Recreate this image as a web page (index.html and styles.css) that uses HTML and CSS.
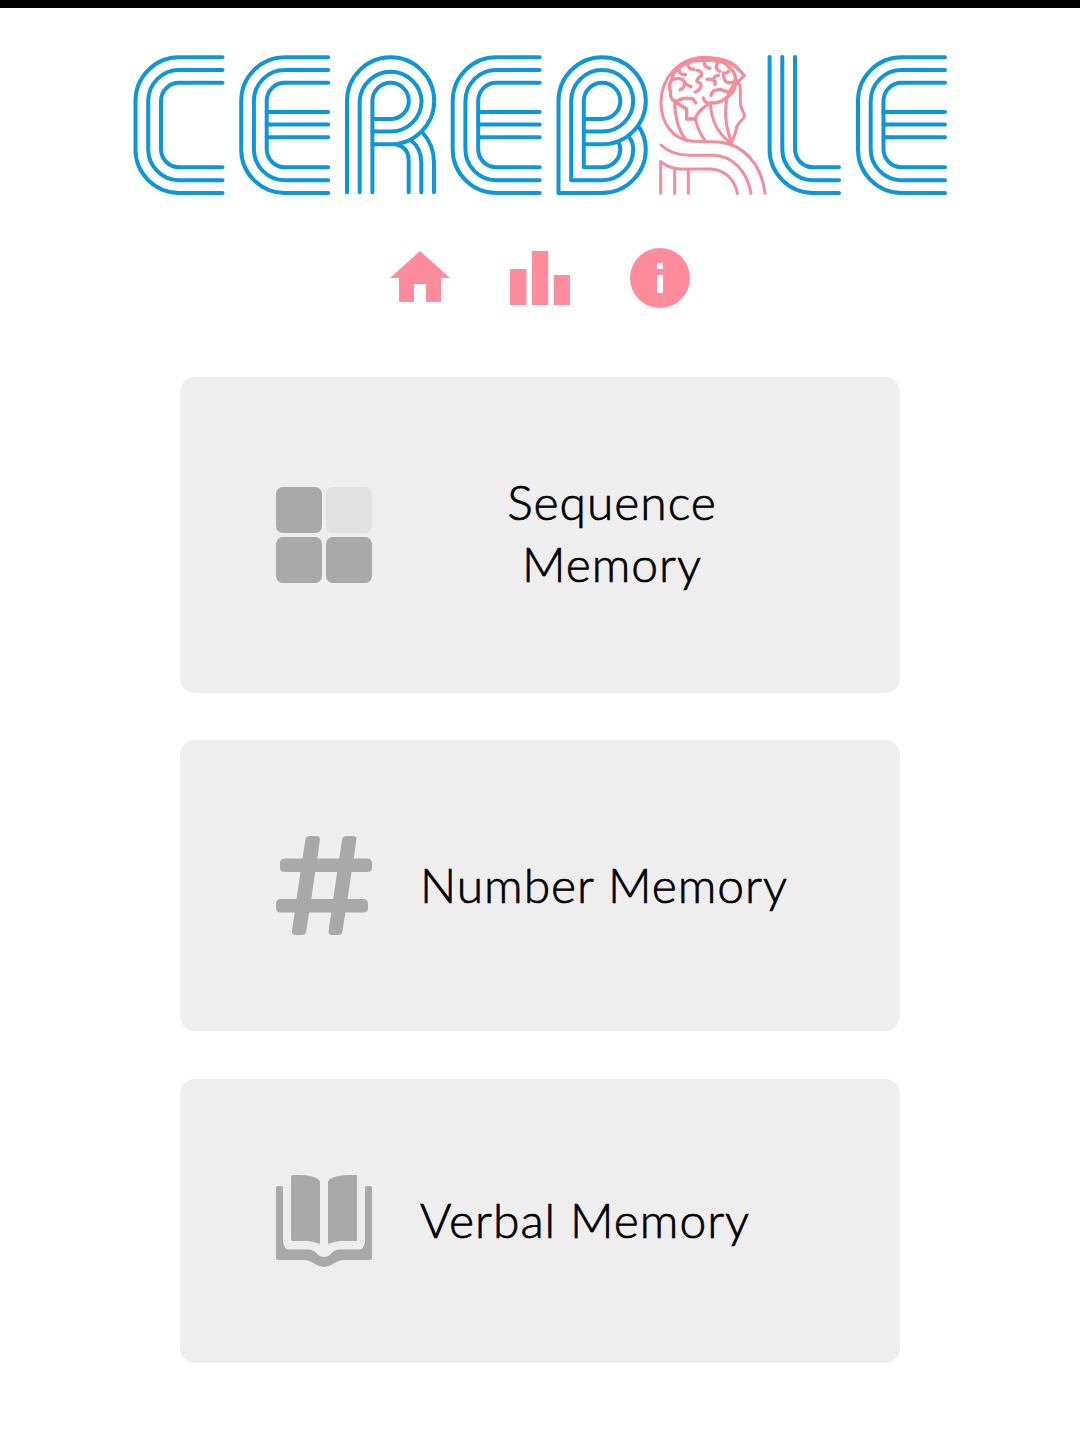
FILE: index.html
```html
<!DOCTYPE html>
<html lang="en">
<head>
<meta charset="utf-8">
<title>Cerebrle</title>
<link rel="stylesheet" href="styles.css">
</head>
<body>
<header class="header">
  <svg class="logo" viewBox="132 54 816 142" role="img" aria-label="Cerebrle">
    <defs>
      <g id="c">
        <path d="M222.5 57.3H179A43.5 43.7 0 0 0 135.5 101V149.3A43.5 43.7 0 0 0 179 193H222.5"/>
        <path d="M222.5 70H179A30.8 31 0 0 0 148.2 101V149.3A30.8 31 0 0 0 179 180.2H222.5"/>
        <path d="M222.5 82.8H179A18 18.2 0 0 0 161 101V149.3A18 18 0 0 0 179 167.2H222.5"/>
      </g>
      <g id="e">
        <use href="#c"/>
        <path d="M161 112H222.5M161 124.6H222.5M161 137.3H222.5"/>
      </g>
    </defs>
    <g class="line">
      <use href="#c"/>
      <use href="#e" x="105.7"/>
      <g>
        <path d="M347 192.3V101A43.6 43.7 0 0 1 434.2 101A43.6 43.5 0 0 1 390.6 144.3H372.5"/>
        <path d="M359.7 192.3V101A31 31 0 0 1 421.6 101A31 30.7 0 0 1 390.6 131.5H372.5"/>
        <path d="M372.4 192.3V101A18.2 18.2 0 0 1 408.8 101A18.2 18 0 0 1 390.6 119H372.5"/>
        <path d="M396 144.5Q408.7 147 408.7 161V192.3M411 140.5Q421.3 148 421.3 163V192.3M422.5 132.5Q434 145 434 163V192.3"/>
      </g>
      <use href="#e" x="317.2"/>
      <g>
        <path d="M637.8 125.5Q645.8 136 645.8 149.3A43.7 43.7 0 0 1 602.2 193H558.5V101A43.6 43.7 0 0 1 645.8 101A43.6 43.5 0 0 1 602.2 144.3H583.8"/>
        <path d="M629 137Q633.2 142 633.2 149.3A31 31 0 0 1 602.2 180.2H571.2V101A31 31 0 0 1 633.2 101A31 30.7 0 0 1 602.2 131.5H583.8"/>
        <path d="M618.5 142.5Q620.3 145 620.3 149.3A18 18 0 0 1 602.2 167.2H583.8V101A18.2 18.2 0 0 1 620.3 101A18.2 18 0 0 1 602.2 119H583.8"/>
      </g>
      <path d="M769.6 57V149.3A43.5 43.7 0 0 0 813 193H839M782.3 57V149.3A30.8 31 0 0 0 813 180.2H839M795 57V149.3A18 18 0 0 0 813 167.2H839"/>
      <use href="#e" x="722.5"/>
    </g>
    <g class="brain" transform="translate(650 45) scale(.33333)">
      <path d="M283 92C258 58 210 37 160 37C85 40 33 101 33 172C33 237 70 285 130 289L205 291C280 296 336 360 345 445"/>
      <path d="M198 40Q250 48 266 73L283 92L262 112Q271 118 271 132V166Q270 181 277 196Q286 212 281 219Q268 231 260 245Q257 270 245 291"/>
      <path d="M33 300Q65 330 118 331H190C250 333 292 380 303 445"/>
      <path d="M32 445V349Q55 370 90 372H182C226 374 255 406 262 445M74 374V445M115 374V445"/>
      <path d="M74 165Q74 245 110 287M181 174Q184 250 240 292M258 112C219 148 219 225 244 291M136 223Q148 267 167 289"/>
      <g class="folds">
        <path d="M110 192V222H134Q143 204 155 192Q164 185 180 174Q215 175 230 157Q253 145 255 122Q263 112 257 104Q256 80 238 67Q225 49 202 50Q182 43 162 47Q132 43 117 54Q94 57 87 72Q68 81 67 101Q53 122 62 140Q58 160 75 171L110 192"/>
        <path d="M67 104Q94 96 103 109Q105 118 123 125M103 109Q107 127 90 134M87 72Q87 91 107 89M113 55Q112 72 132 73M142 76Q158 80 154 92Q139 102 141 110Q159 116 151 128Q147 138 135 141M163 49Q161 67 180 70M205 51Q191 70 209 79M220 91Q223 115 240 113Q250 115 257 105M171 103Q183 101 190 105Q198 110 195 118M190 105Q191 92 206 91M220 84Q229 88 236 79M183 151Q187 132 212 134Q227 138 239 144M76 172Q94 158 115 160Q132 159 137 174M160 159Q163 174 180 174"/>
      </g>
    </g>
  </svg>
  <nav class="nav">
    <a class="nav-link" href="#" aria-label="Home"><svg viewBox="0 0 60 60"><path d="M30 3L60 30H51V54H36V36H24V54H9V30H0z"/></svg></a>
    <a class="nav-link" href="#" aria-label="Statistics"><svg viewBox="0 0 60 60"><path d="M0 21H16.5V57H0zM22 3H38.2V57H22zM43.7 27H60V57H43.7z"/></svg></a>
    <a class="nav-link" href="#" aria-label="Info"><svg viewBox="0 0 60 60"><path fill-rule="evenodd" d="M30 0A30 30 0 1 1 30 60A30 30 0 1 1 30 0zM27 15V21H33V15zM27 27V45H33V27z"/></svg></a>
  </nav>
</header>
<main class="games">
  <a class="card" href="#">
    <svg class="icon" viewBox="0 0 96 96" width="96" height="96"><rect width="46" height="46" rx="7"/><rect class="pale" x="50" width="46" height="46" rx="7"/><rect y="50" width="46" height="46" rx="7"/><rect x="50" y="50" width="46" height="46" rx="7"/></svg>
    <span class="label sequence">Sequence Memory</span>
  </a>
  <a class="card" href="#">
    <svg class="icon" viewBox="0 0 96 99" width="96" height="99"><path d="M34 0H40Q44.400 0 43.900 4L41.300 22.500H63.300L66 4Q66.500 0 70.500 0H77Q81 0 80.300 4L77.800 22.500H91Q96 22.500 96 27V31.500Q96 36 91 36H75.500L71.500 63H87Q92 63 92 68V72Q92 76.500 87 76.500H69.300L66.500 95Q66 99 62 99H56.500Q52 99 52.500 95L55.300 76.500H33L30.300 95Q29.500 99 25.500 99H20Q15.500 99 16 95L18.700 76.500H5Q0 76.500 0 72V68Q0 63 5 63H20.500L24.500 36H9Q4 36 4 31.500V27Q4 22.500 9 22.500H26.500L29.300 4Q29.800 0 34 0zM39.200 36L35.200 63H57.200L61.200 36z"/></svg>
    <span class="label single">Number Memory</span>
  </a>
  <a class="card" href="#">
    <svg class="icon" viewBox="0 0 96 92" width="96" height="92"><path d="M17 0H23Q37 0 43 5Q44 6 44 8V69Q36 66 30 66H17Q15 66 15 64V2Q15 0 17 0zM81 0H75Q59 0 53 5Q52 6 52 8V69Q60 66 66 66H81zM2 11H5Q7 11 7 13V67Q8 74.500 13 74.500H33Q39 75 42 80Q48 84 54 80Q57 75 63 74.500H83Q88 74.500 89 67V13Q89 11 91 11H94Q96 11 96 13V83Q96 85 94 85H68Q63 85 57 89Q48 95 39 89Q33 85 28 85H2Q0 85 0 83V13Q0 11 2 11z"/></svg>
    <span class="label single">Verbal Memory</span>
  </a>
</main>
</body>
</html>
```
FILE: styles.css
```css
* { box-sizing: border-box; }
body {
  margin: 0;
  min-height: 1433px;
  border-top: 8px solid #000;
  background: #fff;
  color: #000;
  font-family: Lato, "Liberation Sans", sans-serif;
}
.header {
  display: flex;
  flex-direction: column;
  align-items: center;
  padding-top: 46px;
}
.logo { display: block; width: 816px; height: 142px; }
.line, .brain { fill: none; stroke-linecap: round; stroke-linejoin: round; }
.line { stroke: #0e97d8; stroke-width: 4; }
.brain { stroke: #f48c9d; stroke-width: 9; }
.folds { stroke-width: 10; }
.nav { display: flex; gap: 60px; margin-top: 52px; }
.nav-link, .nav-link svg { display: block; width: 60px; height: 60px; }
.nav-link svg { fill: #fe8c9d; }
.games {
  display: flex;
  flex-direction: column;
  gap: 47.5px;
  width: 720px;
  margin: 68.9px auto 0;
}
.card {
  display: flex;
  align-items: center;
  gap: 48px;
  padding: 96px;
  border-radius: 15px;
  background: #eee;
  color: inherit;
  text-decoration: none;
}
.icon { flex: none; fill: #a9a9a9; }
.pale { fill: #e1e1e1; }
.label {
  font-size: 48px;
  font-weight: 300;
  line-height: 62px;
  letter-spacing: .95px;
  -webkit-text-stroke: .7px #000;
}
.sequence { flex: 1; margin: -2px 0 0; text-align: center; }
.sequence { margin-bottom: 2px; }
.single { white-space: nowrap; padding-bottom: 2px; }
```
